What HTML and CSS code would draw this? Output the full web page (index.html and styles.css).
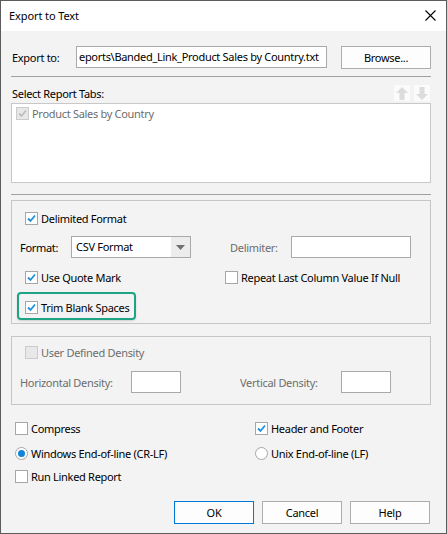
FILE: index.html
```html
<!DOCTYPE html>
<html>
<head>
<meta charset="utf-8">
<link rel="stylesheet" href="styles.css">
</head>
<body>
<div class="window">
  <div class="titlebar">
    <span class="title">Export to Text</span>
    <svg class="close" width="11" height="11" viewBox="0 0 11 11"><path d="M0.5 0.5 L10.5 10.5 M10.5 0.5 L0.5 10.5" stroke="#000" stroke-width="1.1" fill="none"/></svg>
  </div>
  <div class="content">
    <div class="export-row">
      <span class="export-label">Export to:</span>
      <div class="textbox path">eports\Banded_Link_Product Sales by Country.txt</div>
      <div class="btn browse">Browse...</div>
    </div>
    <div class="sep first"></div>
    <div class="tabs-head">
      <span>Select Report Tabs:</span>
      <div class="arrows">
        <div class="arrow-btn"><svg width="12" height="13" viewBox="0 0 12 13"><path d="M6 0 L12 6 L8.5 6 L8.5 13 L3.5 13 L3.5 6 L0 6 Z" fill="#dcdcdc"/></svg></div>
        <div class="arrow-btn"><svg width="12" height="13" viewBox="0 0 12 13"><path d="M6 13 L12 7 L8.5 7 L8.5 0 L3.5 0 L3.5 7 L0 7 Z" fill="#dcdcdc"/></svg></div>
      </div>
    </div>
    <div class="listbox">
      <div class="list-item">
        <span class="cb disabled"><svg width="11" height="11" viewBox="0 0 11 11"><path d="M2 5.5 L4.5 8 L9 2.5" stroke="#bdbdbd" stroke-width="1.8" fill="none"/></svg></span>
        <span class="muted">Product Sales by Country</span>
      </div>
    </div>
    <div class="sep second"></div>

    <div class="group g1">
      <div class="chk-row r-delim">
        <span class="cb"><svg width="11" height="11" viewBox="0 0 11 11"><path d="M2 5.5 L4.5 8 L9 2.5" stroke="#1e8fdc" stroke-width="1.8" fill="none"/></svg></span>
        <span>Delimited Format</span>
      </div>
      <div class="field-row r-format">
        <span class="lbl lbl-format">Format:</span>
        <div class="combo">
          <span class="combo-text">CSV Format</span>
          <span class="combo-btn"><svg width="9" height="5" viewBox="0 0 9 5"><path d="M0 0 L9 0 L4.5 5 Z" fill="#707070"/></svg></span>
        </div>
        <span class="lbl muted lbl-delim">Delimiter:</span>
        <div class="textbox delim"></div>
      </div>
      <div class="chk-row two r-quote">
        <div class="chk-cell left">
          <span class="cb"><svg width="11" height="11" viewBox="0 0 11 11"><path d="M2 5.5 L4.5 8 L9 2.5" stroke="#1e8fdc" stroke-width="1.8" fill="none"/></svg></span>
          <span>Use Quote Mark</span>
        </div>
        <div class="chk-cell">
          <span class="cb"></span>
          <span>Repeat Last Column Value If Null</span>
        </div>
      </div>
      <div class="chk-row r-trim">
        <span class="highlight"></span>
        <span class="cb"><svg width="11" height="11" viewBox="0 0 11 11"><path d="M2 5.5 L4.5 8 L9 2.5" stroke="#1e8fdc" stroke-width="1.8" fill="none"/></svg></span>
        <span>Trim Blank Spaces</span>
      </div>
    </div>

    <div class="group g2">
      <div class="chk-row r-udd">
        <span class="cb disabled"></span>
        <span class="muted">User Defined Density</span>
      </div>
      <div class="field-row r-density">
        <span class="lbl muted lbl-hd">Horizontal Density:</span>
        <div class="textbox small"></div>
        <span class="lbl muted lbl-vd">Vertical Density:</span>
        <div class="textbox small"></div>
      </div>
    </div>

    <div class="options">
      <div class="opt-row r-compress">
        <div class="chk-cell left">
          <span class="cb"></span>
          <span>Compress</span>
        </div>
        <div class="chk-cell">
          <span class="cb"><svg width="11" height="11" viewBox="0 0 11 11"><path d="M2 5.5 L4.5 8 L9 2.5" stroke="#1e8fdc" stroke-width="1.8" fill="none"/></svg></span>
          <span>Header and Footer</span>
        </div>
      </div>
      <div class="opt-row r-eol">
        <div class="chk-cell left">
          <span class="radio on"></span>
          <span>Windows End-of-line (CR-LF)</span>
        </div>
        <div class="chk-cell">
          <span class="radio"></span>
          <span>Unix End-of-line (LF)</span>
        </div>
      </div>
      <div class="opt-row r-linked">
        <div class="chk-cell left">
          <span class="cb"></span>
          <span>Run Linked Report</span>
        </div>
      </div>
    </div>

    <div class="buttons">
      <div class="btn default">OK</div>
      <div class="btn">Cancel</div>
      <div class="btn">Help</div>
    </div>
  </div>
</div>
</body>
</html>
```
FILE: styles.css
```css
* { box-sizing: border-box; }
html, body { margin: 0; padding: 0; background: #ffffff; }
body {
  font-family: "Noto Sans", "Open Sans", "DejaVu Sans", sans-serif;
  font-size: 11px;
  letter-spacing: -0.3px;
  color: #000;
}
.window {
  width: 447px;
  height: 534px;
  border: 1px solid #5c5c5c;
  background: #f3f3f3;
  display: flex;
  flex-direction: column;
}
.titlebar {
  height: 30px;
  background: #ffffff;
  display: flex;
  align-items: center;
  justify-content: space-between;
  padding: 0 10px 0 8px;
}
.title { font-size: 11px; line-height: 14px; letter-spacing: -0.1px; }
.close { display: block; margin-top: -1px; }

.content {
  padding: 15px 15px 0 10px;
  display: flex;
  flex-direction: column;
}
.export-row {
  height: 22px;
  display: flex;
  align-items: center;
}
.export-label { width: 65px; padding-left: 1px; }
.textbox {
  background: #fff;
  border: 1px solid #a9a9a9;
  height: 22px;
}
.textbox.path {
  width: 251px;
  line-height: 20px;
  padding-left: 2px;
  white-space: nowrap;
  overflow: hidden;
}
.btn {
  height: 23px;
  width: 80px;
  background: #fdfdfd;
  border: 1px solid #adadad;
  display: flex;
  align-items: center;
  justify-content: center;
}
.btn.browse { width: 90px; height: 23px; margin-left: 14px; }
.btn.default { border-color: #0078d7; }

.sep { height: 1px; background: #a0a0a0; }
.sep.first { margin-top: 8px; }
.sep.second { margin-top: 11px; }

.tabs-head {
  margin-top: 8px;
  height: 16px;
  display: flex;
  align-items: center;
  justify-content: space-between;
  padding-left: 1px;
}
.arrows { display: flex; gap: 4px; margin-right: 1px; }
.arrow-btn {
  width: 16px;
  height: 16px;
  background: #fbfbfb;
  display: flex;
  align-items: center;
  justify-content: center;
}
.listbox {
  margin-top: 2px;
  height: 80px;
  background: #fff;
  border: 1px solid #c8c8c8;
  padding: 3px 4px;
}
.list-item { display: flex; align-items: center; height: 13px; }
.muted { color: #6d6d6d; }

.cb {
  width: 13px;
  height: 13px;
  border: 1px solid #a6a6a6;
  background: #fff;
  display: inline-flex;
  align-items: center;
  justify-content: center;
  margin-right: 3px;
  flex: none;
}
.cb.disabled { background: #e8e8e8; border-color: #cbcbcb; }
.radio {
  width: 13px;
  height: 13px;
  border: 1px solid #a6a6a6;
  border-radius: 50%;
  background: #fff;
  margin-right: 3px;
  flex: none;
  display: inline-flex;
  align-items: center;
  justify-content: center;
}
.radio.on::after {
  content: "";
  width: 7px;
  height: 7px;
  border-radius: 50%;
  background: #0f85d9;
}

.group {
  border: 1px solid #c6c6c6;
  padding-left: 8px;
}
.g1 { margin-top: 5px; padding-top: 10px; padding-bottom: 9px; }
.g2 { margin-top: 12px; padding-top: 8px; padding-bottom: 11px; }

.chk-row {
  height: 14px;
  display: flex;
  align-items: center;
  padding-left: 5px;
  position: relative;
}
.chk-cell { display: flex; align-items: center; }
.chk-row .chk-cell.left { width: 200px; }
.field-row {
  height: 22px;
  display: flex;
  align-items: center;
}
.r-format { margin-top: 11px; }
.lbl-format { width: 51px; }
.combo {
  width: 120px;
  height: 22px;
  background: #fff;
  border: 1px solid #a9a9a9;
  display: flex;
  align-items: stretch;
  justify-content: space-between;
}
.combo-text { padding-left: 4px; line-height: 20px; }
.combo-btn {
  width: 19px;
  background: #ececec;
  display: flex;
  align-items: center;
  justify-content: center;
}
.lbl-delim { margin-left: 39px; width: 61px; }
.textbox.delim { width: 120px; }
.r-quote { margin-top: 12px; }
.r-trim { margin-top: 16px; }
.highlight {
  position: absolute;
  left: -3px;
  top: -8px;
  width: 119px;
  height: 28px;
  border: 2px solid #1fa385;
  border-radius: 4px;
  box-shadow: 0 1px 2px rgba(0,0,0,0.15);
}

.r-density { margin-top: 12px; }
.lbl-hd { width: 111px; }
.textbox.small { width: 50px; height: 22px; }
.lbl-vd { margin-left: 59px; width: 101px; }

.options { padding-left: 4px; }
.opt-row { height: 14px; display: flex; align-items: center; }
.opt-row .chk-cell.left { width: 240px; }
.r-compress { margin-top: 16px; }
.r-eol { margin-top: 11px; }
.r-linked { margin-top: 9px; }

.buttons {
  margin-top: 18px;
  display: flex;
  justify-content: flex-end;
  gap: 8px;
  padding-right: 1px;
}
```
